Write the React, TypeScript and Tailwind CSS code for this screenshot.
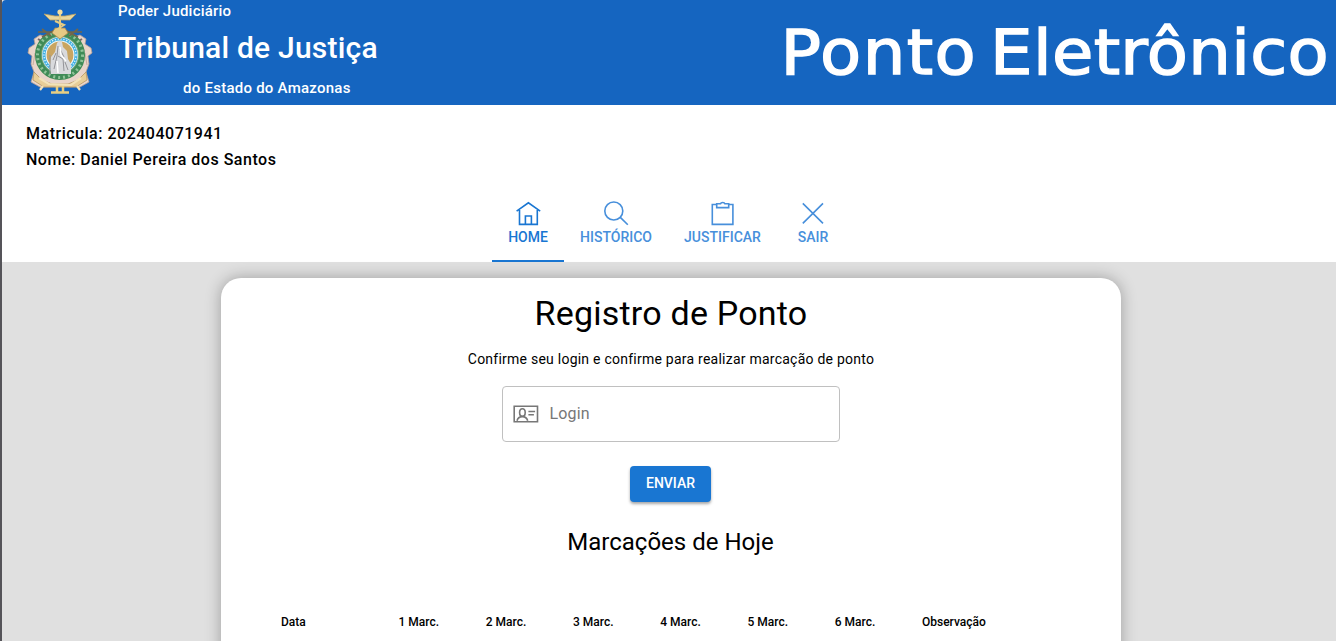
import React from "react";

const tabs = [
  { label: "HOME", active: true, width: "w-[72px]" },
  { label: "HISTÓRICO", active: false, width: "w-[104px]" },
  { label: "JUSTIFICAR", active: false, width: "w-[109px]" },
  { label: "SAIR", active: false, width: "w-[72px]" },
];

const columns = ["1 Marc.", "2 Marc.", "3 Marc.", "4 Marc.", "5 Marc.", "6 Marc."];

function TabIcon({ name }: { name: string }) {
  return (
    <svg className="shrink-0" width="28" height="28" viewBox="0 0 28 28" fill="none" stroke="currentColor" strokeWidth="1.6">
      {name === "HOME" && (
        <path d="M2.6 11.2 14.4 2.8l11.8 8.4M5.5 10v14.4h17.8V10M11.4 24.4V16h6v8.4" />
      )}
      {name === "HISTÓRICO" && (
        <>
          <circle cx="11.8" cy="11" r="9" />
          <path d="m18.3 17.4 7.5 7.3" />
        </>
      )}
      {name === "JUSTIFICAR" && (
        <path d="M7.5 4.5H3.3v19.9h20.6V4.5h-3.8M7.7 3.7h3.8c.5-1.7 3.9-1.7 4.4 0h3.8v3.9h-12z" />
      )}
      {name === "SAIR" && <path d="m3.8 3.4 20.2 20M24 3.4l-20.2 20" />}
    </svg>
  );
}

function Crest() {
  return (
    <svg width="68" height="88" viewBox="0 0 68 88" fill="none">
      <path d="M14 27 8 31l1 5-6 4-1 5 4 3-1 8 3 8-3 10 9 5h40l9-5-3-10 3-8-1-8 4-3-1-5-6-4 1-5-6-4-10 3H24z" fill="#e9d5ca" stroke="#b5a096" strokeWidth="0.8" />
      <path d="m12 31 5 3m-6 5 5 3M56 31l-5 3m6 5-5 3" stroke="#776a68" strokeWidth="2" />
      <path d="m9 45-2 12m52-12 2 12" stroke="#c8aea1" />
      <circle cx="34" cy="47" r="22" fill="#72a57b" stroke="#3f8b57" strokeWidth="6" />
      <circle cx="34" cy="47" r="22.5" stroke="#91c49a" strokeWidth="3" strokeDasharray="2 3" />
      <circle cx="34" cy="47" r="18" fill="#f0f8fa" />
      <circle cx="34" cy="47" r="16" stroke="#42afe1" strokeWidth="3" />
      <circle cx="34" cy="47" r="16" stroke="#d9f3fc" strokeWidth="1.4" strokeDasharray="1.3 1.6" />
      <circle cx="34" cy="47" r="13.4" fill="#c9a561" />
      <path d="m31 35 2-2 3 1 1 5 4 4 1 8 3 5v10H25l-1-8 1-9 4-5z" fill="#d9dadd" />
      <path d="m32 38-1 10-3 13m4-13 5 3 1 12m-4-22 4 8m-11 3 3-7m-6 2v19m15-12 3 8" stroke="#939398" strokeWidth="1" />
      <path d="m34 39 1 8 5 6m-9 0 1 12" stroke="#fff" strokeWidth="1.5" />
      <path d="M12 24h14l8-4 8 4h14M16 21l9 7m27-7-9 7m-27 1 11-6m25 6-11-6" stroke="#70664c" strokeWidth="1.7" />
      <path d="M29 20h10l3 5-8 6-8-6z" fill="#e6c985" stroke="#a7884c" strokeWidth="0.8" />
      <path d="m8 64 8 8 10 4h16l10-4 8-8 1 8-11 7H18L7 72z" fill="#e8ce98" stroke="#b79762" strokeWidth="0.8" />
      <path d="m13 70 10 6 22 1 10-7M17 78l-3 4m37-4 3 4" stroke="#f3e3b9" strokeWidth="2.2" />
      <path d="M25 84.5h18M31 78v6m6-6v6" stroke="#e8ce82" strokeWidth="2.5" />
      <path d="m18 6 11 2h10l11-2-6 6H24z" fill="#e9d69b" stroke="#b59e64" strokeWidth="0.8" />
      <path d="M34 5v24m-5-16 9 4-8 5" stroke="#e5cc83" strokeWidth="2" />
      <circle cx="34" cy="4" r="2.6" fill="#f2dda0" />
    </svg>
  );
}

export default function App() {
  return (
    <div className="h-[641px] w-[1336px] overflow-hidden border-l-2 border-[#555459] bg-[#e0e0e0] font-[Roboto,sans-serif] text-black">
      <header className="flex h-[105px] justify-between rounded-tl-sm bg-[#1565c0] text-white">
        <div className="flex">
          <div className="w-[116px] pt-[8px] pl-6"><Crest /></div>
          <div className="w-[260px] whitespace-nowrap font-medium">
            <div className="h-[22px] text-[15px] leading-[22px] tracking-[0.22px]">Poder Judiciário</div>
            <div className="h-[52px] text-[30px] leading-[52px] tracking-[0.22px]">Tribunal de Justiça</div>
            <div className="pl-[65px] text-[15px] leading-[28px] tracking-[0.25px]">do Estado do Amazonas</div>
          </div>
        </div>
        <div className="origin-right scale-x-[1.085] pr-[6px] text-[62px] leading-[105px] whitespace-nowrap [word-spacing:-9px] font-['DejaVu_Sans',sans-serif] [-webkit-text-stroke:1.4px_white]">
          <span className="tracking-[1.3px]">Ponto </span>
          <span className="tracking-[0.3px]">Eletrônico</span>
        </div>
      </header>
      <section className="h-[85px] bg-white pt-4 pl-6 text-base leading-[26px] font-medium tracking-[0.51px]">
        <p>Matricula: 202404071941</p>
        <p>Nome: Daniel Pereira dos Santos</p>
      </section>
      <nav className="flex h-[72px] bg-white pl-[490px]">
        {tabs.map((t) => (
          <button key={t.label} className={`flex h-full flex-col items-center border-b-2 pt-[10px] text-sm leading-[18px] font-medium ${t.width} ${t.active ? "border-[#1976d2] text-[#1976d2]" : "border-transparent text-[#478fdb]"}`}>
            <TabIcon name={t.label} />
            <span>{t.label}</span>
          </button>
        ))}
      </nav>
      <main className="flex justify-center pt-4 pl-1">
        <div className="flex h-[500px] w-[900px] flex-col items-center rounded-[20px] bg-white shadow-[0_0_16px_rgba(0,0,0,0.3)]">
          <h1 className="mt-[14px] text-[34px] leading-[42px] tracking-[0.22px]">Registro de Ponto</h1>
          <p className="mt-[15px] text-sm leading-5 tracking-[0.24px]">Confirme seu login e confirme para realizar marcação de ponto</p>
          <div className="mt-[17px] flex h-14 w-[338px] items-center gap-[9.5px] rounded-[4px] border border-[#c0c0c0] pl-[9px] text-[#777]">
            <svg width="28" height="28" viewBox="0 0 28 28" fill="none" stroke="currentColor" strokeWidth="1.6">
              <path d="M2.2 6.2h23.3v15.6H2.2zM5 20.8c.7-3 2.7-4.2 5.3-4.2s4.7 1.2 5.4 4.2M16.4 11.5h6.7m-6.7 3.3h5.5" />
              <ellipse cx="10.4" cy="12.5" rx="2.8" ry="3.8" />
            </svg>
            <span className="text-base tracking-[0.15px]">Login</span>
          </div>
          <button className="mt-6 mr-px h-9 w-[81px] rounded-[4px] bg-[#1976d2] pb-[2px] text-sm font-medium text-white shadow-[0_2px_3px_rgba(0,0,0,0.35)]">ENVIAR</button>
          <h2 className="mt-6 mr-px text-2xl leading-8">Marcações de Hoje</h2>
          <div className="mt-[54px] flex w-full pl-[60px] text-xs leading-5 font-medium">
            <span className="w-[117.5px]">Data</span>
            {columns.map((c) => <span key={c} className="w-[87.25px]">{c}</span>)}
            <span>Observação</span>
          </div>
        </div>
      </main>
    </div>
  );
}
